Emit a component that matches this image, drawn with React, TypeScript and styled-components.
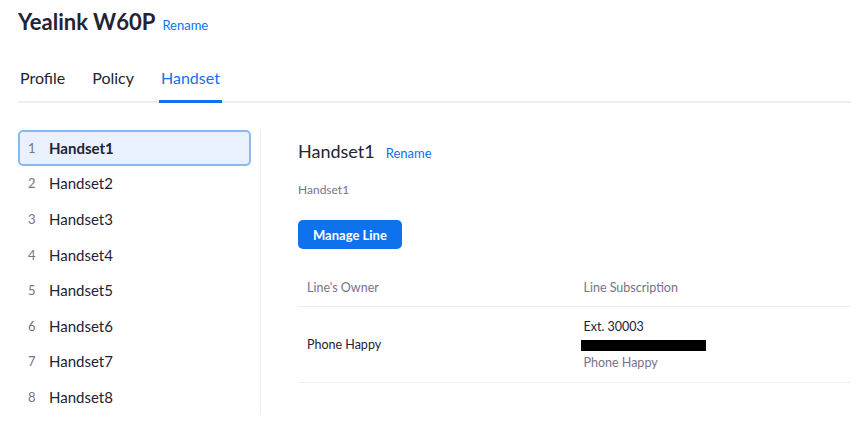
import React from 'react'
import styled, { createGlobalStyle } from 'styled-components';

const handsets = ['Handset1', 'Handset2', 'Handset3', 'Handset4', 'Handset5', 'Handset6', 'Handset7', 'Handset8'];
const tabs = ['Profile', 'Policy', 'Handset'];

export default function App() {
  return (
    <>
      <GlobalStyle />
      <Page>
        <TitleRow>
          <Title>Yealink W60P</Title>
          <LinkButton>Rename</LinkButton>
        </TitleRow>
        <Tabs>
          {tabs.map(t => (
            <Tab key={t} $active={t === 'Handset'}>{t}</Tab>
          ))}
        </Tabs>
        <Body>
          <Sidebar>
            {handsets.map((h, i) => (
              <Item key={h} $selected={i === 0}>
                <Num>{i + 1}</Num>
                <ItemName $selected={i === 0}>{h}</ItemName>
              </Item>
            ))}
          </Sidebar>
          <Panel>
            <PanelTitleRow>
              <PanelTitle>Handset1</PanelTitle>
              <LinkButton>Rename</LinkButton>
            </PanelTitleRow>
            <SubText>Handset1</SubText>
            <PrimaryButton>Manage Line</PrimaryButton>
            <Table>
              <thead>
                <tr>
                  <Th>Line's Owner</Th>
                  <Th>Line Subscription</Th>
                </tr>
              </thead>
              <tbody>
                <tr>
                  <Td>Phone Happy</Td>
                  <Td>
                    <LineText>Ext. 30003</LineText>
                    <Redacted />
                    <LineText $muted>Phone Happy</LineText>
                  </Td>
                </tr>
              </tbody>
            </Table>
          </Panel>
        </Body>
      </Page>
    </>
  )
}

const GlobalStyle = createGlobalStyle`
    body {
        margin: 0;
        background: #fff;
        font-family: Lato, "Open Sans", sans-serif;
        color: #232333;
    }
`;

const Page = styled.div`
    padding: 0 11px 0 18px;
`;

const TitleRow = styled.div`
    display: flex;
    align-items: baseline;
    gap: 7px;
    padding-top: 6px;
    height: 36px;
`;

const Title = styled.h1`
    margin: 0;
    font-size: 22px;
    font-weight: 700;
    line-height: 32px;
    color: #232333;
`;

const LinkButton = styled.span`
    font-size: 13px;
    color: #0e72ed;
    cursor: pointer;
`;

const Tabs = styled.div`
    display: flex;
    gap: 23px;
    margin-top: 22px;
    border-bottom: 2px solid #ededf2;
`;

const Tab = styled.div<{ $active?: boolean }>`
    font-size: 16px;
    line-height: 20px;
    padding: 4px 2px 12px;
    margin-bottom: -2px;
    color: ${p => p.$active ? '#0e72ed' : '#232333'};
    border-bottom: 3px solid ${p => p.$active ? '#0e72ed' : 'transparent'};
`;

const Body = styled.div`
    display: flex;
    margin-top: 27px;
`;

const Sidebar = styled.div`
    width: 243px;
    height: 284px;
    flex-shrink: 0;
    border-right: 1px solid #ededf2;
    box-sizing: border-box;
    padding-right: 9px;
`;

const Item = styled.div<{ $selected?: boolean }>`
    display: flex;
    align-items: center;
    height: 35.6px;
    box-sizing: border-box;
    padding-left: ${p => p.$selected ? '8px' : '10px'};
    border: ${p => p.$selected ? '2px solid #8ab9f2' : 'none'};
    border-radius: 5px;
    background: ${p => p.$selected ? '#e8f1fd' : 'transparent'};
`;

const Num = styled.span`
    width: 21px;
    font-size: 13px;
    color: #747487;
`;

const ItemName = styled.span<{ $selected?: boolean }>`
    font-size: 15px;
    font-weight: ${p => p.$selected ? 700 : 400};
    color: #232333;
`;

const Panel = styled.div`
    flex: 1;
    padding-left: 37px;
`;

const PanelTitleRow = styled.div`
    display: flex;
    align-items: baseline;
    gap: 11px;
    margin-top: 8px;
`;

const PanelTitle = styled.h2`
    margin: 0;
    font-size: 18px;
    font-weight: 400;
    line-height: 26px;
    color: #232333;
`;

const SubText = styled.div`
    margin-top: 18px;
    font-size: 12px;
    line-height: 16px;
    color: #747487;
`;

const PrimaryButton = styled.button`
    display: block;
    margin-top: 22px;
    height: 29px;
    padding: 0 15px;
    border: none;
    border-radius: 5px;
    background: #0e72ed;
    color: #fff;
    font-family: Lato, sans-serif;
    font-size: 13px;
    font-weight: 700;
`;

const Table = styled.table`
    width: 100%;
    margin-top: 19px;
    border-collapse: collapse;
    table-layout: fixed;
`;

const Th = styled.th`
    height: 38px;
    padding: 0 9px;
    text-align: left;
    font-size: 12.5px;
    font-weight: 400;
    color: #747487;
    border-bottom: 1px solid #ededf2;
`;

const Td = styled.td`
    height: 75px;
    padding: 0 9px;
    font-size: 12.5px;
    color: #232333;
    border-bottom: 1px solid #ededf2;
    vertical-align: middle;
`;

const LineText = styled.div<{ $muted?: boolean }>`
    line-height: 18px;
    color: ${p => p.$muted ? '#747487' : '#232333'};
`;

const Redacted = styled.div`
    width: 125px;
    height: 11px;
    margin: 4px 0 3px -3px;
    background: #000;
`;
